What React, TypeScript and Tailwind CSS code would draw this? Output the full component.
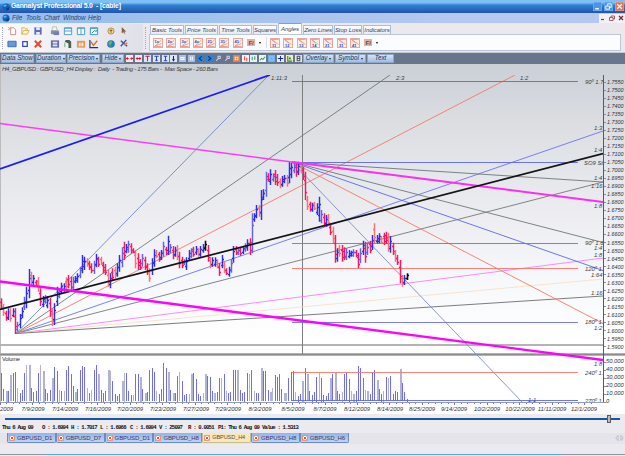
import React from 'react';
import clsx from 'clsx';

type Line = [number, number, number, number, string, number?];

const BAR_STEP = 2.318;

// Price bars: direction, high and low in thirds of a pixel around y = 220
const priceSegments = [
  {
    x: 1.5,
    bars:
      'r235,270 r252,288 r272,302 b265,300 r265,305 b265,292 r265,342 b305,335 b282,325 b262,295 b230,270 b200,265 b147,235 r155,195 b165,195 r180,200 r170,215 r205,258 b228,262 b225,250 b228,265 r235,290 r265,318 b250,315 b200,258 b205,235 b188,222 b190,215 r172,208 r165,205 r170,215 b170,215 b168,190 b160,188 b140,175 b105,160 b110,150 r115,140 r122,150 r130,160 b122,162 b102,142 r110,140 r110,135 r125,160 r132,165 r150,200 b160,205 r145,180 r140,175 b130,170 b105,155 b82,142 r65,120 b72,100 b62,98 r70,100 r85,100 r90,145 r100,150 r118,150 b102,140 r110,150 r130,165 r145,185 b115,165 b88,140 r90,115 r95,125 b90,120 b65,110 r80,105 b47,105 b72,100 r78,118 b80,110 r75,120 r95,145 r110,145 b118,135 b112,150 b90,122 b85,115 r80,110 b78,105 r85,110 b78,110 b72,98 k62,92',
  },
  {
    x: 208.3,
    bars:
      'r75,125 r110,145 b112,140 b112,140 r118,145 r130,168 b105,145 r125,160 r145,165 b140,170 b118,158 b78,128 r78,105 b85,105 r82,108 b78,102 b70,95 b58,92 r55,105 b-20,100 b-20,5 b-45,-5 r-45,-10 b-90,0 b-92,-60 b-145,-70 r-140,-115 b-152,-105 b-140,-115 r-150,-105 r-138,-102 r-125,-95 b-132,-100 b-135,-110 r-135,-100 b-175,-110 b-172,-125 b-175,-140 r-172,-130 b-175,-135 r-165,-140 r-160,-120 r-145,-60 r-72,-30 r-55,-25 b-52,-25 r-55,-30 b-50,-15 b-70,5 b-30,10 r-20,20 b-15,20 r-18,15',
  },
  {
    x: 330.7,
    bars:
      'r10,45 r20,70 r45,128 b85,125 r75,110 r75,125 r82,120 b85,120 b90,115 b92,110 b88,110 r90,112 r98,145 b85,130 b62,105 r65,128 b70,105 r62,100 b45,90 r10,70 b45,70 b40,70 r48,72 r38,75 r35,72 r38,95 b48,98 r68,105 r90,125 r105,135 r120,190 r165,200 b165,195 k160,180',
  },
];

// Tops of the volume bars, thirds of a pixel below y = 350
const volumeTops = [
  70, 117, 122, 122, 76, 70, 65, 113, 128, 120, 70, 45, 45, 115, 125, 123, 68, 46, 62, 117, 130, 121, 83, 52, 62, 119, 123, 123,
  60, 48, 72, 107, 127, 118, 60, 48, 50, 115, 130, 121, 60, 45, 72, 119, 128, 124, 60, 62, 93, 131, 139, 131, 93, 68, 70, 124,
  134, 135, 72, 73, 80, 117, 129, 126, 60, 55, 67, 124, 131, 118, 40, 53, 66, 121, 129, 129, 77, 66, 92, 136, 131, 131, 72, 69,
  87, 132, 138, 129, 72, 79, 80, 124, 130, 126, 84, 84, 72, 123, 130, 126, 60, 60, 61, 120, 130, 125, 70, 72, 60, 124, 130, 130,
  55, 63, 63, 120, 127, 114, 75, 82, 73, 116, 130, 129, 84, 66, 64, 126, 137, 133, 92, 54, 72, 123, 134, 126, 80, 70, 83, 134,
  139, 130, 85, 72, 70, 123, 133, 125, 73, 66, 86, 124, 131, 122, 49, 55, 84, 121, 124, 132, 70, 60, 90, 118, 131, 122, 82, 85,
  78, 133, 124, 126, 58, 99, 126, 146,
];

const lines: Line[] = [
  // fan rising from the July low
  [16, 333.5, 269, 75, '#7288c8'],
  [16, 333.5, 390, 75, '#6d7878'],
  [16, 333.5, 515, 75, '#f27a68'],
  [16, 333.5, 603, 131, '#6a76e6'],
  [16, 333.5, 603, 182, '#747878'],
  [16, 333.5, 603, 258, '#fa80f4'],
  [16, 333.5, 603, 279, '#f8e0cc'],
  [16, 333.5, 603, 296, '#6e6e6e'],
  // fan falling from the August high
  [292, 162, 603, 182, '#6d7878'],
  [292, 162, 603, 242.5, '#6d7878'],
  [292, 162, 603, 270.5, '#5a68ec'],
  [292, 162, 603, 323.5, '#f27a68'],
  [292, 162, 522, 402, '#7e8cc4'],
  // square of nine levels
  [292, 81.5, 578, 81.5, '#5c66e4'],
  [292, 162.5, 578, 162.5, '#5c66e4'],
  [292, 243.5, 578, 243.5, '#6a70ee'],
  [292, 268.5, 578, 268.5, '#fa7468'],
  [292, 322.5, 578, 322.5, '#6a70ee'],
  [292, 372.5, 578, 372.5, '#fa7468'],
  [292, 400.5, 578, 400.5, '#5c66f0'],
  // channels
  [0, 123.5, 292, 162, '#ff3cf4', 1.3],
  [292, 162, 603, 202, '#ff2cf4', 2],
  [0, 169, 270, 75, '#1c1cf4', 1.8],
  [0, 309.5, 603, 153.5, '#141414', 1.7],
  [0, 281.5, 603, 360, '#ff00ff', 2.4],
];

const lineLabels: [number, number, string][] = [
  [271, 79.5, '1:11:3'],
  [396, 79.5, '2:3'],
  [520, 79.5, '1:2'],
  [585, 83.5, '90º 1.75'],
  [594, 129.5, '1:3'],
  [594, 152, '1:4'],
  [584, 164.5, 'SO9 Sta'],
  [594, 180, '1:4'],
  [591, 188, '1:16'],
  [594, 208, '1:8'],
  [585, 244.5, '90º 1.6'],
  [594, 250.2, '1:4'],
  [594, 256.5, '1:8'],
  [585, 270.5, '120º 1.6'],
  [591, 276.8, '1:64'],
  [591, 294.5, '1:16'],
  [585, 324, '180º 1.6'],
  [594, 330, '1:2'],
  [594, 365.5, '1:8'],
  [585, 375, '240º 1.5'],
  [528, 402, '1:1'],
  [585, 402.5, '270º 1.5'],
];

const dates: [number, string][] = [
  [6.5, '2009'], [33, '7/9/2009'], [65, '7/14/2009'], [98, '7/16/2009'], [130, '7/20/2009'], [163, '7/23/2009'],
  [196, '7/27/2009'], [228, '7/29/2009'], [260, '8/3/2009'], [293, '8/5/2009'], [325, '8/7/2009'], [357, '8/12/2009'],
  [390, '8/14/2009'], [422, '8/25/2009'], [454, '9/14/2009'], [487, '10/2/2009'], [520, '10/22/2009'], [552, '11/11/2009'],
  [584, '12/1/2009'],
];

const barColors: Record<string, string[]> = {
  r: ['#ff1460', '#f8746c'],
  b: ['#2c2cf4', '#6464e0'],
  k: ['#101010', '#101010'],
};

const PriceBars = () => (
  <g>
    {priceSegments.map((segment) =>
      segment.bars.split(' ').map((bar, i) => {
        const [hi, lo] = bar.slice(1).split(',').map((v) => 220 + Number(v) / 3);
        const up = bar[0] !== 'r';
        const x = Math.round(segment.x + i * BAR_STEP - 0.5) + 0.5;
        const span = lo - hi;
        const open = Math.round(up ? lo - span * 0.28 : hi + span * 0.28) + 0.5;
        const close = Math.round(up ? hi + span * 0.3 : lo - span * 0.3) + 0.5;
        return (
          <path
            key={`${segment.x}-${i}`}
            d={`M${x} ${hi}V${lo}M${x - 1.5} ${open}H${x}M${x} ${close}H${x + 1.5}`}
            stroke={barColors[bar[0]][i % 3 === 1 ? 1 : 0]}
            strokeWidth={bar[0] === 'k' ? 1.6 : 1.45}
            fill="none"
          />
        );
      }),
    )}
  </g>
);

const Chart = () => (
  <svg viewBox="0 64 625 350" className="block h-[350px] w-[625px] shrink-0 font-['Liberation_Sans',Arial,sans-serif]">
    <defs>
      <linearGradient id="sky" x1="0" y1="0" x2="0" y2="1">
        <stop offset="0" stopColor="#cbd0d6" />
        <stop offset="0.1" stopColor="#d4d8de" />
        <stop offset="0.16" stopColor="#dcdde1" />
        <stop offset="0.27" stopColor="#e1e4e8" />
        <stop offset="0.45" stopColor="#eeeef2" />
        <stop offset="0.6" stopColor="#f6f7fa" />
        <stop offset="0.8" stopColor="#ffffff" />
      </linearGradient>
      <clipPath id="plot">
        <rect x="0" y="75" width="603" height="328" />
      </clipPath>
    </defs>
    <rect x="0" y="64" width="625" height="350" fill="url(#sky)" />
    <rect x="0" y="64" width="1" height="340" fill="#bcbcbc" />
    <text x="2" y="70.8" fontSize="6.1" fontStyle="italic" fill="#3c4044" textLength="216" xmlSpace="preserve">
      H4_GBPUSD : GBPUSD_H4 Display :  Daily  - Trading - 175 Bars -  Max Space - 260 Bars
    </text>

    <g shapeRendering="crispEdges">
      <rect x="0" y="344" width="603" height="2" fill="#b4b4b4" />
      <rect x="0" y="353" width="625" height="3" fill="#b2b2b2" />
      <rect x="0" y="354" width="625" height="1" fill="#8c8c8c" />
      <rect x="302" y="75" width="1" height="279" fill="#7c7e80" />
      {volumeTops.map((top, i) => {
        const pale = i % 7 === 4 || i % 5 === 2;
        return (
          <rect
            key={i}
            x={Math.round(1 + i * BAR_STEP)}
            y={Math.round(350 + top / 3)}
            width={pale && i % 2 === 0 ? 2 : 1}
            height={Math.round((154 - top) / 3)}
            fill={pale ? '#b0b4d2' : '#6e6eee'}
          />
        );
      })}
    </g>

    <g clipPath="url(#plot)">
      {lines.slice(0, 20).map(([x1, y1, x2, y2, color, width = 0.9], i) => (
        <line key={i} x1={x1} y1={y1} x2={x2} y2={y2} stroke={color} strokeWidth={width} />
      ))}
      <PriceBars />
      {lines.slice(20).map(([x1, y1, x2, y2, color, width = 0.9], i) => (
        <line key={i} x1={x1} y1={y1} x2={x2} y2={y2} stroke={color} strokeWidth={width} />
      ))}
    </g>

    <g fontSize="5.9" fontStyle="italic" fill="#3a3e42" clipPath="url(#plot)">
      {lineLabels.map(([x, y, label]) => (
        <text key={`${x}-${y}`} x={x} y={y}>
          {label}
        </text>
      ))}
    </g>
    <text x="2" y="360.8" fontSize="5.8" fill="#303030" textLength="18">Volume</text>

    {/* Axes */}
    <g shapeRendering="crispEdges">
      <rect x="603" y="75" width="1" height="328" fill="#4056b0" />
      <rect x="0" y="402" width="604" height="1" fill="#8e9cc4" />
      {Array.from({ length: 41 }, (_, i) => (
        <rect key={i} x="604" y={Math.round(81.5 + i * 8.015)} width="2" height="1" fill="#8890a8" />
      ))}
      {Array.from({ length: 92 }, (_, i) => (
        <rect key={i} x={Math.round(i * 6.49)} y="403" width="1" height={i % 5 === 0 ? 2 : 1} fill="#7078a0" />
      ))}
    </g>
    <g fontSize="6.2" fontStyle="italic" fill="#30343a">
      {Array.from({ length: 34 }, (_, i) => (
        <text key={i} x="607" y={84.2 + i * 8.015} textLength="16.5" lengthAdjust="spacingAndGlyphs">
          {(1.755 - i * 0.005).toFixed(4)}
        </text>
      ))}
      {['50,000', '40,000', '30,000', '20,000', '10,000', '0'].map((v, i) => (
        <text key={v} x="606" y={363.4 + i * 8} fontSize="5.8">
          {v}
        </text>
      ))}
    </g>
    <g fontSize="5.9" fontStyle="italic" fill="#30343a" textAnchor="middle">
      {dates.map(([x, label]) => (
        <text key={label} x={x} y="411.2">
          {label}
        </text>
      ))}
    </g>
  </svg>
);

const Globe = () => (
  <svg viewBox="0 0 8 8" className="h-[8px] w-[8px] shrink-0">
    <circle cx="4" cy="4" r="3.5" fill="#1460b8" />
    <path d="M1 3Q3 .5 5 2L3 4z" fill="#5cb8f4" />
    <path d="M4 7.5A3.5 3.5 0 0 0 7.5 4L5 5z" fill="#0c3c7c" />
  </svg>
);

const toolIcons: Record<string, React.ReactNode> = {
  new: <g><path d="M4 2h3.5l2 2v5.5H4z" fill="#fff" stroke="#c07068" strokeWidth=".8" /><path d="M1 1l3 3M1 4h2M4 1v2" stroke="#e8945c" strokeWidth=".9" /></g>,
  open: <path d="M2 9V2h3l1 1h2v2M2 9l2-4h6L8 9z" fill="#fff4c8" stroke="#d0aa50" strokeWidth=".9" />,
  save: <g><path d="M1.5 1.5h8v8h-8z" fill="#6068c0" /><path d="M3.5 1.5h4v3h-4zM3.5 6.5h4v3h-4z" fill="#e8eafc" /></g>,
  print: <g><path d="M3 1h4l1 4H2z" fill="#f8f8f8" stroke="#909090" strokeWidth=".6" /><path d="M1 5h9v4H1z" fill="#8c9098" /><path d="M4 7h6v3H4z" fill="#6e7cb8" /></g>,
  rows: <path d="M1.5 2h8v7.5h-8zM1.5 5.5h8M1.5 2.5h8" fill="#f0fbff" stroke="#4898cc" />,
  cols: <path d="M1.5 2h8v7.5h-8zM5.5 2v7.5M1.5 2.5h8" fill="#f0fbff" stroke="#4898cc" />,
  chart: <g><path d="M1.5 2h8v7.5h-8zM1.5 2.5h8" fill="#e4f6ff" stroke="#3c8ccc" /><path d="M3 8l3-3 2 1 1-2" fill="none" stroke="#209060" /></g>,
  lock: <g><circle cx="5.5" cy="5.5" r="3.4" fill="#f0d890" stroke="#b08848" /><path d="M5.5 3.5v4M4 5h3" stroke="#806030" /></g>,
  cursor: <path d="M3 1l5 5H6l1 4-2-3-2 1z" fill="#8c6038" />,
  panel: <path d="M1 2.5h9v6H1z" fill="#6898dc" stroke="#3c68bc" />,
  square: <path d="M3 3h5v5H3z" fill="#fff" stroke="#3848d0" strokeWidth="1.4" />,
  remove: <path d="M2 2l7 7M9 2L2 9" stroke="#e8482c" strokeWidth="2.2" />,
  film: <g><path d="M1 1.5h9v8H1z" fill="#6070a8" /><path d="M3 3h5v2H3zM3 6h5v2H3z" fill="#e4e8f8" /></g>,
  door: <g><path d="M3 1h4l2 2v7H6V5L2 3z" fill="#486050" /><path d="M2 4v5" stroke="#68a868" /></g>,
  grid: <g><path d="M1 2h9v7.5H1z" fill="#e49c50" /><path d="M3 4h2v4H3zM6 4h2v4H6z" fill="#fff0d8" /></g>,
  trend: <g><path d="M1 1v8.5h9" fill="none" stroke="#203070" strokeWidth="1.3" /><path d="M2 3l3 4 4-5" fill="none" stroke="#c87830" strokeWidth="1.6" /></g>,
  world: <g><circle cx="5.5" cy="5.5" r="4.2" fill="#2878c4" /><path d="M3 3l3-1 1 2-2 2 1 3-3-3z" fill="#60b858" /></g>,
  tools: <g><path d="M2 2l7 6M8 1L2 8" stroke="#3c50a0" strokeWidth="1.5" /><path d="M6 7l3-3" stroke="#e08048" strokeWidth="1.6" /></g>,
};

const ToolRow = ({ names }: { names: string[] }) => (
  <div className="flex h-[13.5px] items-center">
    {names.map((name, i) => (
      <div
        key={name}
        className={clsx(
          'flex h-[13px] w-[13.3px] shrink-0 items-center justify-center',
          (i === 3 || i === 7) && 'ml-[3px]',
        )}
      >
        <svg viewBox="0 0 11 11" className="h-[10px] w-[10px]" fill="none">
          {toolIcons[name]}
        </svg>
      </div>
    ))}
  </div>
);

const AngleIcon = ({ flip, label }: { flip?: boolean; label: string }) => (
  <svg viewBox="0 0 10 10" className="mr-[3.3px] h-[10px] w-[10px] shrink-0">
    <rect x=".5" y=".5" width="9" height="9" fill="#fdeee8" stroke="#e8a8a0" />
    <path d={flip ? 'M1.5 1.5L8.5 6.5M1.5 1.5L5.5 5M1.5 1.5h7' : 'M1.5 8.5L8.5 2M1.5 8.5h7M1.5 8.5L8.5 5.5'} stroke="#e88c80" strokeWidth=".8" fill="none" />
    <text x={flip ? 2 : 1.5} y={flip ? 8.6 : 4.8} fontSize="4" fontWeight="bold" fill="#34409c">
      {label}
    </text>
  </svg>
);

const FlagIcon = () => (
  <div className="ml-px mr-[5px] flex items-center gap-[4px]">
    <span className="flex h-[7px] w-[8px] items-center justify-center bg-[#e8b098] text-[6px] font-bold leading-none text-[#4c5070]">F/</span>
    <span className="h-0 w-0 border-x-[1.5px] border-t-[2px] border-x-transparent border-t-black" />
  </div>
);

const toolTabs: [string, string][] = [
  ['Basic Tools', 'w-[34px]'],
  ['Price Tools', 'w-[33px]'],
  ['Time Tools', 'w-[33px]'],
  ['Squares', 'w-[24px]'],
  ['Angles', 'w-[24px]'],
  ['Zero Lines', 'w-[30px]'],
  ['Stop Loss', 'w-[28px]'],
  ['Indicators', 'w-[28px]'],
];

const Toolbar = () => (
  <div className="flex h-[30px] shrink-0 border-b border-[#c4c8cc] bg-[#ebe9ed]">
    <div className="mt-px flex h-[28px] w-[143px] rounded-r-[2px] bg-linear-to-r from-[#fbfbfd] to-[#e0e0e8]">
      <div className="ml-[2px] mt-[3px] h-[22px] border-l border-dotted border-[#a8a8b0]" />
      <div className="ml-[2px]">
        <ToolRow names={['new', 'open', 'save', 'print', 'rows', 'cols', 'chart', 'lock', 'cursor']} />
        <ToolRow names={['panel', 'square', 'remove', 'film', 'door', 'grid', 'trend', 'world', 'tools']} />
      </div>
    </div>
    <div className="ml-[2px] mt-[4px] h-[22px] border-l border-dotted border-[#a8a8b0]" />
    <div className="ml-[3px] flex flex-col">
      <div className="flex h-[11px] items-end gap-px pl-px">
        {toolTabs.map(([label, width]) => (
          <div
            key={label}
            className={clsx(
              'flex items-center justify-center whitespace-nowrap rounded-t-[1px] border-x border-t text-[6px] italic leading-none tracking-[-0.01em] text-[#3c4254]',
              width,
              label === 'Angles'
                ? 'h-[11px] border-x-[#b8c4dc] border-t-[1.5px] border-t-[#f48048] bg-white'
                : 'h-[9px] border-[#a8bcdc] bg-linear-to-b from-white to-[#e4ebf6]',
            )}
          >
            {label}
          </div>
        ))}
      </div>
      <div className="flex h-[17px] w-[472px] items-center border border-[#bcc6d8] bg-[#fbfcfe] pl-[3px]">
        {['1x', '2x', '3x', '4x', '21', '31', '41'].map((label) => (
          <AngleIcon key={label} label={label} />
        ))}
        <FlagIcon />
        <div className="mr-[3px] h-[11px] border-l border-[#d8dce4]" />
        {['11', '12', '13', '14', '21', '31', '41'].map((label) => (
          <AngleIcon key={label} label={label} flip />
        ))}
        <FlagIcon />
      </div>
    </div>
  </div>
);

const BarButton = ({ label, className, arrow }: { label: string; className: string; arrow?: boolean }) => (
  <div
    className={clsx(
      'flex h-[9px] shrink-0 items-center justify-center gap-[2px] whitespace-nowrap border border-[#8ea8cc] bg-linear-to-b from-[#d4e4f8] to-[#a2bde0] text-[6.3px] italic leading-none text-[#24304c]',
      className,
    )}
  >
    {label}
    {arrow && <span className="h-0 w-0 border-x-[1.5px] border-t-[2px] border-x-transparent border-t-[#203050]" />}
  </div>
);

const miniIcons: [string, string, string][] = [
  ['#f6e8ee', '#e01838', 'M0 4h3M5 4h3M1.5 2.5v3M6.5 2.5v3'],
  ['#f6e8ee', '#e01838', 'M1 4h6M2.5 2.5v3M5.5 2.5v3'],
  ['#dce6f8', '#c82048', 'M1.5 1.5h5M4 1.5V7'],
  ['#dce6f8', '#2848c8', 'M1.5 1.5h5M4 1.5V7M2.5 6h3'],
  ['#dce6f8', '#2848c8', 'M2 1.5h4M4 1.5V6M2 6.5h4'],
  ['#dce6f8', '#101c78', 'M4 1v6M2.5 5.5h3'],
  ['#a8c0e8', '#f4f8ff', 'M1.5 3h5M1.5 5h5'],
  ['#a8c0e8', '#f4f8ff', 'M3 2v4M5 2v4'],
  ['#2884d8', '#0c2c70', 'M5.5 1.5L2.5 4l3 2.5'],
  ['#2884d8', '#0c2c70', 'M2.5 1.5L5.5 4l-3 2.5'],
  ['#66748c', '#c8d4f8', 'M3.5 1.5h2.5v2.5H3.5zM3.5 4.5L1.5 6.5'],
  ['#66748c', '#c8d4f8', 'M3.5 1.5h2.5v2.5H3.5zM3.5 4.5L1.5 6.5'],
  ['#f07840', '#fff0e0', 'M2.5 2.5h3v3h-3z'],
  ['#eef4f4', '#e04848', 'M3 1.5V6M5.5 3v4'],
  ['#eef4f4', '#30a060', 'M2.5 2v4M5.5 1.5v4'],
  ['#eef4f4', '#28a050', 'M1 6l2-2 1.5 1L7 2'],
  ['#6cb0f0', '#8cc4f8', 'M2 2h4v4H2z'],
  ['#e8f0fc', '#1828c0', 'M4 1v6M1 4h6'],
  ['#f4ecc0', '#28883c', 'M2 1v6h5M3.5 5l1-2 1 2'],
  ['#e4e8ec', '#4c5460', 'M2.5 1.5h3v5h-3zM2.5 4h3'],
];

const ChartBar = () => (
  <div className="flex h-[11px] shrink-0 items-center bg-[#67758d] pl-px">
    <BarButton label="Data Show" className="w-[33px]" />
    <BarButton label="Duration" className="ml-[2px] w-[30px]" arrow />
    <BarButton label="Precision" className="ml-px w-[33px]" arrow />
    <BarButton label="Hide" className="ml-[2px] w-[22px]" arrow />
    <div className="ml-[1px] flex w-[178px] items-center justify-between px-px">
      {miniIcons.map(([bg, fg, d], i) => (
        <svg key={i} viewBox="0 0 8 8" className="h-[7px] w-[7px]">
          <rect width="8" height="8" fill={bg} />
          <path d={d} stroke={fg} strokeWidth="1.2" fill="none" />
        </svg>
      ))}
    </div>
    <BarButton label="Overlay" className="w-[31px]" arrow />
    <BarButton label="Symbol" className="ml-px w-[31px]" arrow />
    <BarButton label="Text" className="ml-px w-[27px]" />
  </div>
);

const sheets = ['GBPUSD_D1', 'GBPUSD_D7', 'GBPUSD_D1', 'GBPUSD_H8', 'GBPUSD_H4', 'GBPUSD_H8', 'GBPUSD_H6'];

const status: [string, string][] = [
  ['Thu 6 Aug 09', 'w-[40px]'],
  ['O : 1.6994', 'w-[29px]'],
  ['H : 1.7017', 'w-[29px]'],
  ['L : 1.6966', 'w-[30px]'],
  ['C : 1.6994', 'w-[29px]'],
  ['V : 25097', 'w-[29px]'],
  ['R : 0.0051', 'w-[30px]'],
  ['P1: Thu 6 Aug 09', 'w-[44px]'],
  ['Value : 1.5313', 'w-[40px]'],
];

export default function App() {
  return (
    <div className="flex h-[456px] w-[625px] flex-col overflow-hidden bg-[#ebebef] font-['Liberation_Sans',Arial,sans-serif]">
      {/* Title bar */}
      <div className="flex h-[13px] shrink-0 items-center bg-linear-to-b from-[#7cc0f4] from-20% via-[#2f80d4] via-40% to-[#2454a8] pl-[2px] pr-px">
        <Globe />
        <span className="ml-[1px] w-[85px] whitespace-nowrap text-[6.8px] font-bold leading-none tracking-[-0.03em] text-white">
          Gannalyst Professional 5.0
        </span>
        <span className="whitespace-nowrap text-[6.8px] font-bold leading-none tracking-[-0.02em] text-white">- [cable]</span>
        <div className="ml-auto flex gap-[2px]">
          <svg viewBox="0 0 10 10" className="h-[9px] w-[9px]"><rect width="10" height="10" rx="1.5" fill="#4c94e4" stroke="#9cc8f4" strokeWidth=".8" /><path d="M2.5 7.5h4" stroke="#fff" strokeWidth="1.5" /></svg>
          <svg viewBox="0 0 10 10" className="h-[9px] w-[9px]"><rect width="10" height="10" rx="1.5" fill="#4c94e4" stroke="#9cc8f4" strokeWidth=".8" /><path d="M4 4V2h4v4H6M2 4.5h4V8H2z" stroke="#fff" fill="none" /></svg>
          <svg viewBox="0 0 10 10" className="h-[9px] w-[9px]"><rect width="10" height="10" rx="1.5" fill="#e4745c" stroke="#f4b8a8" strokeWidth=".8" /><path d="M2.5 2.5l5 5M7.5 2.5l-5 5" stroke="#fff" strokeWidth="1.4" /></svg>
        </div>
      </div>

      {/* Menu */}
      <div className="flex h-[10px] shrink-0 items-center bg-linear-to-r from-[#92bdec] to-[#b4c8f0] to-70% pl-[2px] text-[6.4px] italic leading-none text-[#28406c]">
        <Globe />
        <span className="ml-[2px] w-[14px]">File</span>
        <span className="w-[18px]">Tools</span>
        <span className="w-[19px]">Chart</span>
        <span className="w-[25px]">Window</span>
        <span>Help</span>
        <div className="ml-auto flex h-[9px] w-[26px] items-center justify-around bg-[#f2f2f6]">
          <svg viewBox="0 0 6 6" className="h-[6px] w-[6px]"><path d="M1 4.5h3" stroke="#a03030" strokeWidth="1.2" /></svg>
          <svg viewBox="0 0 6 6" className="h-[6px] w-[6px]"><path d="M2 2V1h3.5v3H4M.5 2.5H4v3H.5z" stroke="#983840" strokeWidth=".8" fill="none" /></svg>
          <svg viewBox="0 0 6 6" className="h-[6px] w-[6px]"><path d="M1 1l4 4M5 1L1 5" stroke="#802830" strokeWidth="1.3" /></svg>
        </div>
      </div>

      <Toolbar />
      <ChartBar />
      <Chart />

      {/* Time slider */}
      <div className="flex h-[9px] shrink-0 items-center bg-[#ebebef] pl-[5px]">
        <div className="h-[2px] w-[602px] bg-[#1f5596]" />
        <div className="h-[8px] w-[4px] border border-[#585c60] bg-[#b8bcc0]" />
        <div className="h-[2px] w-[9px] bg-[#1f5596]" />
      </div>

      {/* Quote line */}
      <div className="flex h-[10px] shrink-0 items-center pl-[2px] font-['Liberation_Mono','Courier_New',monospace] text-[5.6px] font-bold leading-none tracking-[-0.14em] text-[#101010]">
        {status.map(([text, width]) => (
          <span key={text} className={clsx('shrink-0 whitespace-nowrap', width)}>
            {text}
          </span>
        ))}
      </div>

      <div className="flex h-[11px] shrink-0 items-start bg-[#e4e4ea] pl-[7px]">
        {sheets.map((name, i) => (
          <div
            key={i}
            className={clsx(
              'flex h-[10px] w-[48.8px] shrink-0 items-center gap-[2px] rounded-b-[2px] border border-t-0 pl-px leading-none',
              i === 4
                ? 'border-[#c8bc90] bg-[#f8e8b8] text-[5.6px] text-[#604c40]'
                : 'border-[#6c8cbc] bg-linear-to-b from-[#94b4e4] to-[#c0d4f0] text-[6px] text-[#3c3878]',
            )}
          >
            <svg viewBox="0 0 7 7" className="h-[6px] w-[6px] shrink-0">
              <rect x=".4" y=".4" width="6.2" height="6.2" rx="1" fill="#fff" stroke="#e06040" strokeWidth=".9" />
              <path d="M1.8 1.8l3.4 3.4M5.2 1.8L1.8 5.2" stroke="#e04828" strokeWidth="1.1" />
            </svg>
            <span className="whitespace-nowrap tracking-[-0.02em]">{name}</span>
          </div>
        ))}
        <svg viewBox="0 0 9 6" className="ml-auto mr-[1px] mt-[2px] h-[6px] w-[9px]">
          <path d="M3 .5L.8 3 3 5.5zM6 .5L8.2 3 6 5.5z" fill="#f4f4f8" stroke="#a4a8b4" strokeWidth=".7" />
        </svg>
      </div>
      <div className="mb-px mt-auto flex h-px shrink-0">
        <div className="w-[46px] bg-[#8c98a8]" />
        <div className="w-[516px] bg-[#5ca4e4]" />
        <div className="flex-1 bg-[#8c98a8]" />
      </div>
    </div>
  );
}
